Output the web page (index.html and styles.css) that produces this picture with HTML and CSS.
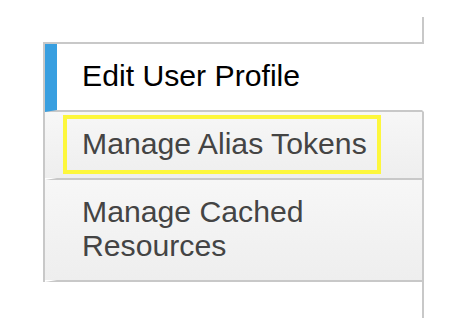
FILE: index.html
```html
<!DOCTYPE html>
<html lang="en">
<head>
  <meta charset="UTF-8">
  <meta name="viewport" content="width=device-width, initial-scale=1.0">
  <title>Profile settings</title>
  <link rel="stylesheet" href="styles.css">
</head>
<body>
  <div class="layout">
    <ul class="tabs">
      <li class="tab active"><a href="#">Edit User Profile</a></li>
      <li class="tab"><a href="#" class="focused">Manage Alias Tokens</a></li>
      <li class="tab"><a href="#">Manage Cached Resources</a></li>
    </ul>
    <div class="panel"></div>
  </div>
</body>
</html>
```

FILE: styles.css
```css
html, body {
  height: 100%;
}

body {
  margin: 0;
  padding: 17px 0 0 43px;
  box-sizing: border-box;
  background: #ffffff;
  font-family: "Liberation Sans", Arial, Helvetica, sans-serif;
  overflow: hidden;
}

.layout {
  display: flex;
  align-items: flex-start;
  height: 100%;
}

.tabs {
  list-style: none;
  margin: 25px -2px 0 0;
  padding: 0;
  width: 379px;
  border-top: 2px solid #c8c8c8;
  border-left: 2px solid #c8c8c8;
  position: relative;
  z-index: 1;
}

.tab {
  border-left: 12px solid transparent;
  border-right: 2px solid #c8c8c8;
  border-bottom: 2px solid #c8c8c8;
  background: linear-gradient(#f7f7f7, #eeeeee);
}

.tab.active {
  border-left-color: #389fe0;
  border-right-color: #ffffff;
  background: #ffffff;
}

.tab a {
  display: inline-block;
  margin: 7px 0 8px 10px;
  padding: 8px 10px 9px 15px;
  font-size: 30.2px;
  line-height: 34px;
  color: #444444;
  text-decoration: none;
}

.tab.active a {
  color: #000000;
}

.tab a.focused {
  outline: 4px solid #fdf73c;
}

.panel {
  flex: 1;
  align-self: stretch;
  border-left: 2px solid #c8c8c8;
}
```
